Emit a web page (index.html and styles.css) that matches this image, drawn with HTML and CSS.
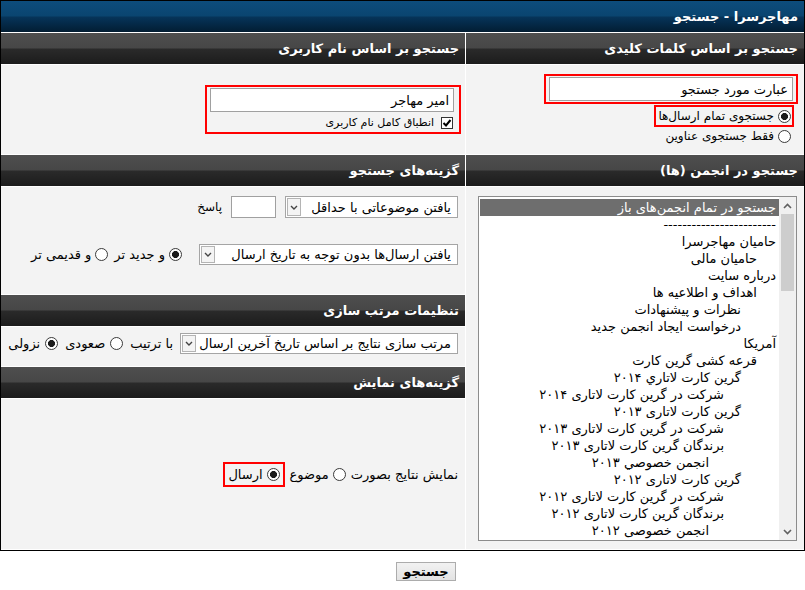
FILE: index.html
```html
<!DOCTYPE html>
<html lang="fa" dir="rtl">
<head>
<meta charset="utf-8">
<title>مهاجرسرا - جستجو</title>
<link rel="stylesheet" href="styles.css">
</head>
<body>
<div class="page">
  <div class="frame">
    <div class="title">مهاجرسرا - جستجو</div>
    <div class="grid">
      <div class="hdr">جستجو بر اساس کلمات کلیدی</div>
      <div class="hdr">جستجو بر اساس نام کاربری</div>

      <div class="cell kw">
        <div class="hl inbox"><input class="txt" type="text" value="عبارت مورد جستجو"></div>
        <div class="hl opt optbox"><span class="radio on"></span><span>جستجوی تمام ارسال&zwnj;ها</span></div>
        <div class="opt optplain"><span class="radio"></span><span>فقط جستجوی عناوین</span></div>
      </div>

      <div class="cell user">
        <div class="hl ubox">
          <input class="txt" type="text" value="امیر مهاجر">
          <div class="opt chkrow">
            <span class="check"><svg width="10" height="10" viewBox="0 0 10 10"><path d="M1.5 5 L4 7.5 L8.5 2" fill="none" stroke="#000" stroke-width="2"/></svg></span>
            <span>انطباق کامل نام کاربری</span>
          </div>
        </div>
      </div>

      <div class="stack">
        <div class="hdr">جستجو در انجمن (ها)</div>
        <div class="cell listcell">
          <div class="listbox">
            <div class="items">
              <div class="item l0 sel">جستجو در تمام انجمن&zwnj;های باز</div>
              <div class="item l0">------------------------</div>
              <div class="item l0">حامیان مهاجرسرا</div>
              <div class="item l1">حامیان مالی</div>
              <div class="item l0">درباره سایت</div>
              <div class="item l1">اهداف و اطلاعیه ها</div>
              <div class="item l2">نظرات و پیشنهادات</div>
              <div class="item l2">درخواست ایجاد انجمن جدید</div>
              <div class="item l0">آمریکا</div>
              <div class="item l1">قرعه کشی گرین کارت</div>
              <div class="item l2">گرین کارت لاتاري ۲۰۱۴</div>
              <div class="item l3">شرکت در گرین کارت لاتاری ۲۰۱۴</div>
              <div class="item l2">گرین کارت لاتاری ۲۰۱۳</div>
              <div class="item l3">شرکت در گرین کارت لاتاری ۲۰۱۳</div>
              <div class="item l3">برندگان گرین کارت لاتاری ۲۰۱۳</div>
              <div class="item l4">انجمن خصوصي ۲۰۱۳</div>
              <div class="item l2">گرین کارت لاتاری ۲۰۱۲</div>
              <div class="item l3">شرکت در گرین کارت لاتاری ۲۰۱۲</div>
              <div class="item l3">برندگان گرین کارت لاتاری ۲۰۱۲</div>
              <div class="item l4">انجمن خصوصی ۲۰۱۲</div>
            </div>
            <div class="sb">
              <div class="sb-btn"><svg width="9" height="6" viewBox="0 0 9 6"><path d="M1 5 L4.5 1.5 L8 5" fill="none" stroke="#606060" stroke-width="1.6"/></svg></div>
              <div class="thumb"></div>
              <div class="sb-space"></div>
              <div class="sb-btn"><svg width="9" height="6" viewBox="0 0 9 6"><path d="M1 1 L4.5 4.5 L8 1" fill="none" stroke="#606060" stroke-width="1.6"/></svg></div>
            </div>
          </div>
        </div>
      </div>

      <div class="stack">
        <div class="hdr">گزینه&zwnj;های جستجو</div>
        <div class="cell opts">
          <div class="row r1">
            <div class="select s1"><span class="sel-text">یافتن موضوعاتی با حداقل</span><span class="arrow"><svg width="8" height="5" viewBox="0 0 8 5"><path d="M1 1 L4 4 L7 1" fill="none" stroke="#444" stroke-width="1.4"/></svg></span></div>
            <input class="txt small" type="text" value="">
            <span class="lbl">پاسخ</span>
          </div>
          <div class="row r2">
            <div class="select s2"><span class="sel-text">یافتن ارسال&zwnj;ها بدون توجه به تاریخ ارسال</span><span class="arrow"><svg width="8" height="5" viewBox="0 0 8 5"><path d="M1 1 L4 4 L7 1" fill="none" stroke="#444" stroke-width="1.4"/></svg></span></div>
            <span class="opt"><span class="radio on"></span><span>و جدید تر</span></span>
            <span class="opt"><span class="radio"></span><span>و قدیمی تر</span></span>
          </div>
        </div>
        <div class="hdr">تنظیمات مرتب سازی</div>
        <div class="cell sort">
          <div class="row r3">
            <div class="select s3"><span class="sel-text">مرتب سازی نتایج بر اساس تاریخ آخرین ارسال</span><span class="arrow"><svg width="8" height="5" viewBox="0 0 8 5"><path d="M1 1 L4 4 L7 1" fill="none" stroke="#444" stroke-width="1.4"/></svg></span></div>
            <span class="lbl">با ترتیب</span>
            <span class="opt"><span class="radio"></span><span>صعودی</span></span>
            <span class="opt"><span class="radio on"></span><span>نزولی</span></span>
          </div>
        </div>
        <div class="hdr">گزینه&zwnj;های نمایش</div>
        <div class="cell disp">
          <span class="lbl">نمایش نتایج بصورت</span>
          <span class="opt"><span class="radio"></span><span>موضوع</span></span>
          <span class="hl opt dispbox"><span class="radio on"></span><span>ارسال</span></span>
        </div>
      </div>
    </div>
  </div>
  <div class="actions"><button class="btn" type="button">جستجو</button></div>
</div>
</body>
</html>
```
FILE: styles.css
```css
* { box-sizing: border-box; }

body {
  margin: 0;
  background: #fff;
  font-family: "DejaVu Sans", sans-serif;
  font-size: 12px;
  color: #000;
}

.page {
  width: 805px;
  direction: rtl;
}

.frame {
  border: 1px solid #000;
  background: #fff;
}

.title {
  height: 31px;
  line-height: 31px;
  padding-right: 6px;
  color: #fff;
  font-weight: bold;
  font-size: 13px;
  background: linear-gradient(to bottom, #0d4c7c 0%, #0a4570 48%, #063459 52%, #021d33 100%);
}

.grid {
  display: grid;
  grid-template-columns: 338px 1fr;
  gap: 1px;
  margin-top: 1px;
  padding-bottom: 1px;
}

.hdr {
  height: 31px;
  line-height: 31px;
  padding-right: 6px;
  color: #fff;
  font-weight: bold;
  font-size: 13px;
  white-space: nowrap;
  background: linear-gradient(to bottom, #4e4e4e 0%, #474747 48%, #2a2a2a 52%, #1c1c1c 100%);
}

.cell {
  background: #f3f3f3;
}

.stack {
  display: flex;
  flex-direction: column;
  gap: 1px;
}

.hl {
  border: 2px solid #f00;
}

.txt {
  width: 244px;
  height: 24px;
  border: 1px solid #a0a0a0;
  background: #fff;
  padding: 0 4px;
  font-family: "DejaVu Sans", sans-serif;
  font-size: 13px;
  color: #000;
  direction: rtl;
}

.txt.small {
  width: 45px;
  height: 22px;
}

.opt {
  display: inline-flex;
  align-items: center;
  gap: 4px;
  white-space: nowrap;
}

.lbl {
  white-space: nowrap;
}

.radio {
  display: inline-block;
  width: 13px;
  height: 13px;
  border: 1px solid #3a3a3a;
  border-radius: 50%;
  background: #fff;
  flex: none;
}

.radio.on {
  background: radial-gradient(circle, #1a1a1a 0 3.2px, #fff 3.8px);
}

.check {
  display: inline-flex;
  align-items: center;
  justify-content: center;
  width: 12px;
  height: 12px;
  border: 1px solid #333;
  background: #fff;
  flex: none;
}

/* keyword search */
.kw {
  height: 89px;
  display: flex;
  flex-direction: column;
  justify-content: center;
  align-items: flex-start;
  padding-right: 6px;
}

.inbox {
  padding: 1px 3px;
}

.optbox {
  margin-top: 1px;
  height: 22px;
  padding: 0 1px 0 2px;
  margin-right: 4px;
}

.optplain {
  height: 18px;
  padding: 0 1px 0 2px;
  border: 2px solid transparent;
  border-top: 0;
  border-bottom: 0;
  margin-right: 4px;
}

/* username search */
.user {
  height: 89px;
  display: flex;
  align-items: center;
  padding-right: 4px;
}

.ubox {
  display: flex;
  flex-direction: column;
  align-items: flex-start;
  padding: 1px 5px 3px 3px;
}

.chkrow {
  margin-top: 4px;
  padding-right: 1px;
  gap: 7px;
  font-size: 11px;
}

/* forum list */
.listcell {
  flex: 1;
  padding: 9px 7px 8px 0;
}

.listbox {
  width: 319px;
  height: 345px;
  border: 1px solid #8c8c8c;
  background: #fff;
  display: flex;
}

.items {
  flex: 1;
  padding: 2px 0 0 1px;
  overflow: hidden;
}

.item {
  height: 17px;
  line-height: 17px;
  font-size: 13px;
  white-space: nowrap;
}

.item.sel {
  background: #6e6e6e;
  color: #fff;
}

.l0 { padding-right: 3px; }
.l1 { padding-right: 22px; }
.l2 { padding-right: 38px; }
.l3 { padding-right: 55px; }
.l4 { padding-right: 70px; }

.sb {
  order: -1;
  width: 17px;
  background: #f0f0f0;
  display: flex;
  flex-direction: column;
}

.sb-btn {
  height: 17px;
  display: flex;
  align-items: center;
  justify-content: center;
}

.thumb {
  height: 77px;
  margin: 0 2px;
  background: #cdcdcd;
}

.sb-space {
  flex: 1;
}

/* options */
.row {
  display: flex;
  align-items: center;
}

.opts {
  height: 107px;
  padding: 9px 7px 0 0;
}

.r1 { height: 22px; gap: 9px; }
.r2 { height: 21px; margin-top: 26px; gap: 6px; font-size: 13px; }
.r2 .select { margin-left: 11px; }

.select {
  display: flex;
  align-items: center;
  height: 100%;
  border: 1px solid #a5a5a5;
  background: #fff;
  padding: 1px 6px 1px 1px;
  font-size: 13px;
  white-space: nowrap;
}

.sel-text {
  flex: 1;
}

.arrow {
  width: 14px;
  height: 100%;
  border: 1px solid #b4b4b4;
  background: #f4f4f4;
  display: flex;
  align-items: center;
  justify-content: center;
}

.s1 { width: 173px; }
.s2 { width: 259px; }
.s3 { width: 278px; }

.sort {
  height: 39px;
  padding: 6px 7px 0 0;
}

.r3 { height: 21px; gap: 7px; font-size: 13px; }
.r3 .opt { gap: 5px; }

.disp {
  flex: 1;
  display: flex;
  align-items: center;
  gap: 5px;
  padding-right: 7px;
  font-size: 13px;
}

.dispbox {
  padding: 3px;
}

.actions {
  padding: 11px 0 0 47px;
  text-align: center;
}

.btn {
  width: 60px;
  height: 19px;
  padding: 0;
  border: 1px solid #acacac;
  background: linear-gradient(to bottom, #f2f2f2, #e3e3e3);
  font-family: "DejaVu Sans", sans-serif;
  font-size: 13px;
  font-weight: bold;
  color: #000;
  line-height: 17px;
}
```
